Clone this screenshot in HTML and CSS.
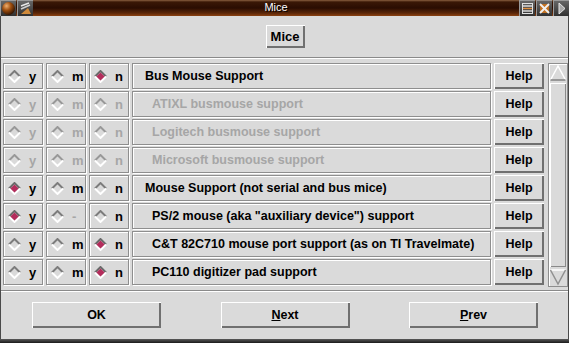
FILE: index.html
```html
<!DOCTYPE html>
<html lang="en">
<head>
    <meta charset="UTF-8">
    <title>Mice</title>
    <link rel="stylesheet" href="styles.css">
</head>
<body>

    <svg class="defs" width="0" height="0">
        <symbol id="dia-off" viewBox="0 0 12 12">
            <polyline points="0.9,6 6,0.9 11.1,6" fill="none" stroke="#7c7c7c" stroke-width="1.8"/>
            <polyline points="0.9,6 6,11.1 11.1,6" fill="none" stroke="#ffffff" stroke-width="1.8"/>
        </symbol>
        <symbol id="dia-on" viewBox="0 0 12 12">
            <polyline points="0.9,6 6,0.9 11.1,6" fill="none" stroke="#6a6a6a" stroke-width="1.8"/>
            <polyline points="0.9,6 6,11.1 11.1,6" fill="none" stroke="#ffffff" stroke-width="1.8"/>
            <polygon points="6,2.2 9.8,6 6,9.8 2.2,6" fill="#b42d5c"/>
        </symbol>
        <symbol id="dia-dis" viewBox="0 0 12 12">
            <polyline points="0.9,6 6,0.9 11.1,6" fill="none" stroke="#989898" stroke-width="1.8"/>
            <polyline points="0.9,6 6,11.1 11.1,6" fill="none" stroke="#ffffff" stroke-width="1.8"/>
        </symbol>
    </svg>

    <div class="window">
        <div class="titlebar">
            <div class="tb-icons">
                <span class="tb-btn">
                    <svg width="15" height="15" viewBox="0 0 15 15">
                        <defs>
                            <radialGradient id="ball" cx="0.35" cy="0.3" r="0.75">
                                <stop offset="0" stop-color="#f0b070"/>
                                <stop offset="0.45" stop-color="#a05010"/>
                                <stop offset="1" stop-color="#2a1000"/>
                            </radialGradient>
                        </defs>
                        <circle cx="7.5" cy="7.5" r="6.5" fill="url(#ball)"/>
                    </svg>
                </span>
                <span class="tb-btn">
                    <svg width="15" height="15" viewBox="0 0 15 15">
                        <polyline points="3,5 11,2" stroke="#e8e8e8" stroke-width="1.5" fill="none"/>
                        <polyline points="3,8 12,4" stroke="#d0d0d0" stroke-width="1.5" fill="none"/>
                        <polygon points="3,13 10,7 13,13" fill="#d08a3a"/>
                    </svg>
                </span>
            </div>
            <div class="tb-title">Mice</div>
            <div class="tb-icons">
                <span class="tb-btn">
                    <svg width="15" height="15" viewBox="0 0 15 15">
                        <rect x="2.5" y="2.5" width="10" height="10" fill="none" stroke="#e0e0e0"/>
                        <line x1="3" y1="5" x2="12" y2="5" stroke="#f0f0f0" stroke-width="1.3"/>
                        <line x1="3" y1="7.5" x2="12" y2="7.5" stroke="#e09040" stroke-width="1.3"/>
                        <line x1="3" y1="10" x2="12" y2="10" stroke="#f0f0f0" stroke-width="1.3"/>
                    </svg>
                </span>
                <span class="tb-btn">
                    <svg width="15" height="15" viewBox="0 0 15 15">
                        <rect x="3" y="3" width="9" height="9" fill="#c07020"/>
                        <line x1="3" y1="3" x2="12" y2="12" stroke="#f0f0f0" stroke-width="2"/>
                        <line x1="12" y1="3" x2="3" y2="12" stroke="#f0f0f0" stroke-width="2"/>
                    </svg>
                </span>
                <span class="tb-btn">
                    <svg width="15" height="15" viewBox="0 0 15 15">
                        <polygon points="5,2 11,7.5 5,13" fill="#a8a8a8" stroke="#e8e8e8"/>
                    </svg>
                </span>
            </div>
        </div>

        <div class="content">
            <div class="header">
                <button class="btn btn-title">Mice</button>
            </div>

            <div class="list">
                <div class="rows">
                    <div class="cell"><svg class="dia"><use href="#dia-off"/></svg><span>y</span></div>
                    <div class="cell"><svg class="dia"><use href="#dia-off"/></svg><span>m</span></div>
                    <div class="cell"><svg class="dia"><use href="#dia-on"/></svg><span>n</span></div>
                    <div class="label">Bus Mouse Support</div>
                    <button class="btn btn-help">Help</button>

                    <div class="cell off"><svg class="dia"><use href="#dia-dis"/></svg><span>y</span></div>
                    <div class="cell off"><svg class="dia"><use href="#dia-dis"/></svg><span>m</span></div>
                    <div class="cell off"><svg class="dia"><use href="#dia-dis"/></svg><span>n</span></div>
                    <div class="label sub off">ATIXL busmouse support</div>
                    <button class="btn btn-help">Help</button>

                    <div class="cell off"><svg class="dia"><use href="#dia-dis"/></svg><span>y</span></div>
                    <div class="cell off"><svg class="dia"><use href="#dia-dis"/></svg><span>m</span></div>
                    <div class="cell off"><svg class="dia"><use href="#dia-dis"/></svg><span>n</span></div>
                    <div class="label sub off">Logitech busmouse support</div>
                    <button class="btn btn-help">Help</button>

                    <div class="cell off"><svg class="dia"><use href="#dia-dis"/></svg><span>y</span></div>
                    <div class="cell off"><svg class="dia"><use href="#dia-dis"/></svg><span>m</span></div>
                    <div class="cell off"><svg class="dia"><use href="#dia-dis"/></svg><span>n</span></div>
                    <div class="label sub off">Microsoft busmouse support</div>
                    <button class="btn btn-help">Help</button>

                    <div class="cell"><svg class="dia"><use href="#dia-on"/></svg><span>y</span></div>
                    <div class="cell"><svg class="dia"><use href="#dia-off"/></svg><span>m</span></div>
                    <div class="cell"><svg class="dia"><use href="#dia-off"/></svg><span>n</span></div>
                    <div class="label">Mouse Support (not serial and bus mice)</div>
                    <button class="btn btn-help">Help</button>

                    <div class="cell"><svg class="dia"><use href="#dia-on"/></svg><span>y</span></div>
                    <div class="cell dash"><svg class="dia"><use href="#dia-off"/></svg><span>-</span></div>
                    <div class="cell"><svg class="dia"><use href="#dia-off"/></svg><span>n</span></div>
                    <div class="label sub">PS/2 mouse (aka "auxiliary device") support</div>
                    <button class="btn btn-help">Help</button>

                    <div class="cell"><svg class="dia"><use href="#dia-off"/></svg><span>y</span></div>
                    <div class="cell"><svg class="dia"><use href="#dia-off"/></svg><span>m</span></div>
                    <div class="cell"><svg class="dia"><use href="#dia-on"/></svg><span>n</span></div>
                    <div class="label sub">C&amp;T 82C710 mouse port support (as on TI Travelmate)</div>
                    <button class="btn btn-help">Help</button>

                    <div class="cell"><svg class="dia"><use href="#dia-off"/></svg><span>y</span></div>
                    <div class="cell"><svg class="dia"><use href="#dia-off"/></svg><span>m</span></div>
                    <div class="cell"><svg class="dia"><use href="#dia-on"/></svg><span>n</span></div>
                    <div class="label sub">PC110 digitizer pad support</div>
                    <button class="btn btn-help">Help</button>
                </div>

                <div class="scrollbar">
                    <svg class="arrow" width="18" height="18" viewBox="0 0 18 18">
                        <polyline points="1.5,16 9,2 16.5,16" fill="none" stroke="#ffffff" stroke-width="1.5"/>
                        <line x1="1.5" y1="16" x2="16.5" y2="16" stroke="#808080" stroke-width="1.5"/>
                    </svg>
                    <div class="thumb"></div>
                    <svg class="arrow" width="18" height="18" viewBox="0 0 18 18">
                        <line x1="1.5" y1="2" x2="16.5" y2="2" stroke="#ffffff" stroke-width="1.5"/>
                        <polyline points="1.5,2 9,16 16.5,2" fill="none" stroke="#909090" stroke-width="1.5"/>
                    </svg>
                </div>
            </div>

            <div class="footer">
                <button class="btn btn-big">OK</button>
                <button class="btn btn-big"><u>N</u>ext</button>
                <button class="btn btn-big"><u>P</u>rev</button>
            </div>
        </div>
        <div class="bottom-frame"></div>
    </div>

</body>
</html>
```

FILE: styles.css
```css
body {
    margin: 0;
    background-color: #dadada;
    font-family: "Liberation Sans", Arial, sans-serif;
    font-weight: bold;
    font-size: 12.5px;
    color: #000;
}
.defs {
    position: absolute;
    width: 0;
    height: 0;
}
.window {
    width: 569px;
    height: 343px;
    display: flex;
    flex-direction: column;
    background-color: #dadada;
}
.titlebar {
    height: 16px;
    display: flex;
    align-items: stretch;
    background: linear-gradient(to bottom, #8a6040 0px, #3a1806 2px, #2a0d02 8px, #5a2608 13px, #8a4010 16px);
}
.tb-icons {
    display: flex;
    gap: 1px;
}
.tb-btn {
    width: 16px;
    height: 16px;
    display: flex;
    align-items: center;
    justify-content: center;
    background: linear-gradient(to bottom, #6a6a6a, #303030);
    box-shadow: inset 1px 1px 0 #9a9a9a;
}
.tb-title {
    flex: 1;
    text-align: center;
    color: #ffffff;
    font-weight: normal;
    font-size: 11px;
    line-height: 15px;
    text-shadow: 1px 1px 0 #000;
}
.content {
    flex: 1;
    display: flex;
    flex-direction: column;
    border-left: 1px solid #4a4a4a;
    border-right: 1px solid #4a4a4a;
}
.header {
    height: 41px;
    display: flex;
    align-items: center;
    justify-content: center;
    border-bottom: 1px solid #8a8a8a;
    box-shadow: 0 1px 0 #ffffff;
}
.btn {
    font-family: inherit;
    font-weight: bold;
    font-size: 12.5px;
    color: #000;
    background-color: #dadada;
    border: 0;
    padding: 0;
    box-shadow: inset 1px 1px 0 #ffffff, inset -2px -2px 0 #707070;
}
.btn-title {
    width: 39px;
    height: 23px;
    font-size: 13px;
    margin-left: 1px;
}
.list {
    display: flex;
    gap: 4px;
    padding: 5px 1px 0 2px;
    height: 224px;
}
.rows {
    display: grid;
    grid-template-columns: 40px 40px 40px 359px 50px;
    grid-auto-rows: 26px;
    column-gap: 3px;
    row-gap: 2px;
}
.cell {
    display: flex;
    align-items: center;
    gap: 8px;
    padding-left: 4px;
    font-size: 13px;
    border: 1px solid #8e8e8e;
    box-shadow: inset 1px 1px 0 #ffffff, 1px 1px 0 #ffffff;
}
.dia {
    width: 13px;
    height: 13px;
    flex: none;
}
.label {
    display: flex;
    align-items: center;
    padding-left: 12px;
    border: 1px solid #8e8e8e;
    box-shadow: inset 1px 1px 0 #ffffff, 1px 1px 0 #ffffff;
    white-space: nowrap;
}
.label.sub {
    padding-left: 19px;
}
.off,
.dash span {
    color: #a6a6a6;
}
.btn-help {
    width: 50px;
    height: 26px;
}
.scrollbar {
    width: 20px;
    display: flex;
    flex-direction: column;
    border: 1px solid #8e8e8e;
    box-shadow: inset 1px 1px 0 #ffffff;
}
.arrow {
    display: block;
    margin: 0 auto;
}
.thumb {
    flex: 1;
    margin: 1px 1px;
    box-shadow: inset 1px 1px 0 #ffffff, inset -1px -1px 0 #8a8a8a;
}
.footer {
    flex: 1;
    display: flex;
    align-items: center;
    justify-content: space-between;
    padding: 0 30px 0 31px;
    border-top: 1px solid #8a8a8a;
    box-shadow: inset 0 1px 0 #ffffff;
    margin-top: 3px;
}
.btn-big {
    width: 129px;
    height: 26px;
}
.bottom-frame {
    height: 4px;
    background: linear-gradient(to bottom, #5a5a5a, #1a1a1a);
}
```
